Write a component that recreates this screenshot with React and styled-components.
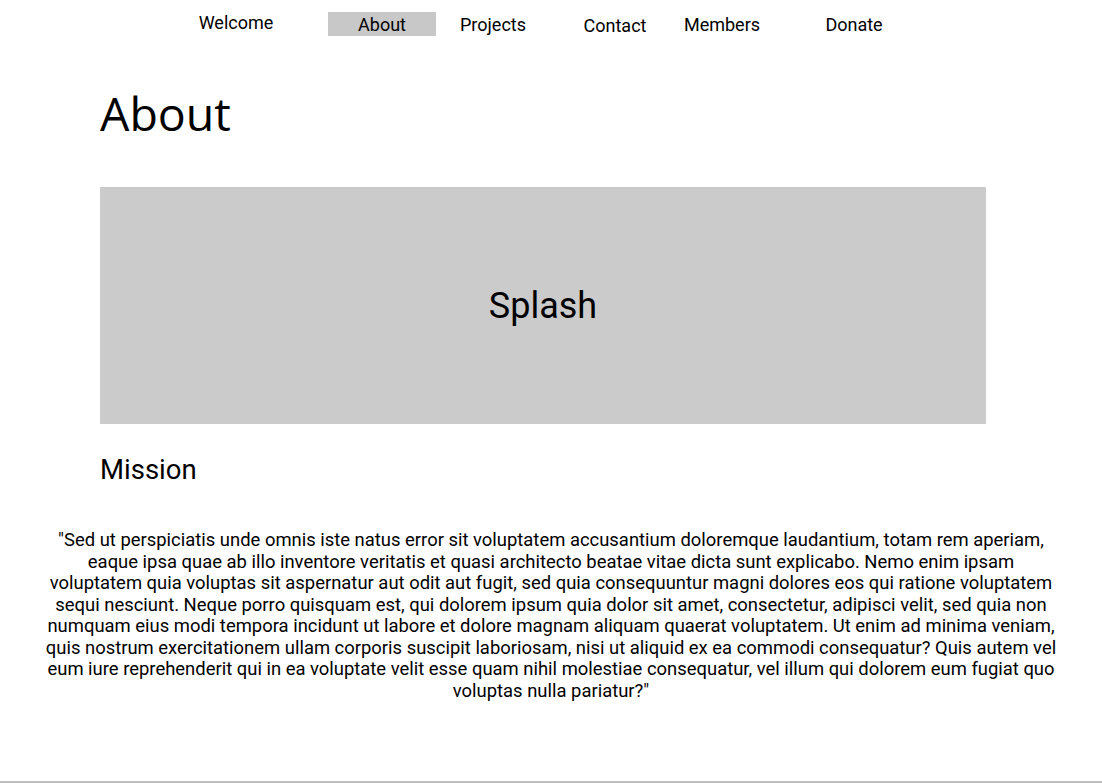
import React from "react";
import styled, { createGlobalStyle } from "styled-components";

const GlobalStyle = createGlobalStyle`
  html, body { margin: 0; padding: 0; background: #ffffff; }
  body { font-family: Roboto, "Liberation Sans", sans-serif; color: #000; }
`;

const Page = styled.div`
  height: 781px;
  border-bottom: 2px solid #bdbdbd;
  overflow: hidden;
`;

const Nav = styled.nav`
  display: grid;
  grid-template-columns: 184px 108px 114px 130px 84px 180px;
  padding-left: 144px;
  padding-top: 12px;
  height: 36px;
  align-items: start;
`;

const NavItem = styled.a`
  display: flex;
  align-items: center;
  justify-content: center;
  height: 24px;
  margin-top: ${(p) => p.$dy || 0}px;
  font-size: 18px;
  color: #000;
  text-decoration: none;
  background: ${(p) => (p.$active ? "#c8c8c8" : "transparent")};
`;

const Content = styled.main`
  margin-left: 100px;
  width: 886px;
  display: flex;
  flex-direction: column;
`;

const Title = styled.h1`
  margin: 41px 0 0 0;
  font-family: "Open Sans", sans-serif;
  font-weight: 400;
  font-size: 46.5px;
  line-height: 48px;
`;

const Splash = styled.div`
  margin-top: 50px;
  height: 237px;
  background: #cbcbcb;
  display: flex;
  align-items: center;
  justify-content: center;
  font-size: 36px;
`;

const SectionTitle = styled.h2`
  margin: 30px 0 0 0;
  font-weight: 400;
  font-size: 27.5px;
  line-height: 32px;
`;

const Paragraph = styled.p`
  margin: 43px auto 0;
  width: 1016px;
  text-align: center;
  font-size: 18.43px;
  line-height: 21.57px;
`;

const navItems = [
  { label: "Welcome", dy: -2 },
  { label: "About", active: true },
  { label: "Projects" },
  { label: "Contact", dy: 1 },
  { label: "Members" },
  { label: "Donate" },
];

const text =
  '"Sed ut perspiciatis unde omnis iste natus error sit voluptatem accusantium doloremque laudantium, totam rem aperiam, eaque ipsa quae ab illo inventore veritatis et quasi architecto beatae vitae dicta sunt explicabo. Nemo enim ipsam voluptatem quia voluptas sit aspernatur aut odit aut fugit, sed quia consequuntur magni dolores eos qui ratione voluptatem sequi nesciunt. Neque porro quisquam est, qui dolorem ipsum quia dolor sit amet, consectetur, adipisci velit, sed quia non numquam eius modi tempora incidunt ut labore et dolore magnam aliquam quaerat voluptatem. Ut enim ad minima veniam, quis nostrum exercitationem ullam corporis suscipit laboriosam, nisi ut aliquid ex ea commodi consequatur? Quis autem vel eum iure reprehenderit qui in ea voluptate velit esse quam nihil molestiae consequatur, vel illum qui dolorem eum fugiat quo voluptas nulla pariatur?"';

export default function App() {
  return (
    <Page>
      <GlobalStyle />
      <Nav>
        {navItems.map((n) => (
          <NavItem key={n.label} href="#" $active={n.active} $dy={n.dy}>
            {n.label}
          </NavItem>
        ))}
      </Nav>
      <Content>
        <Title>About</Title>
        <Splash>Splash</Splash>
        <SectionTitle>Mission</SectionTitle>
      </Content>
      <Paragraph>{text}</Paragraph>
    </Page>
  );
}
